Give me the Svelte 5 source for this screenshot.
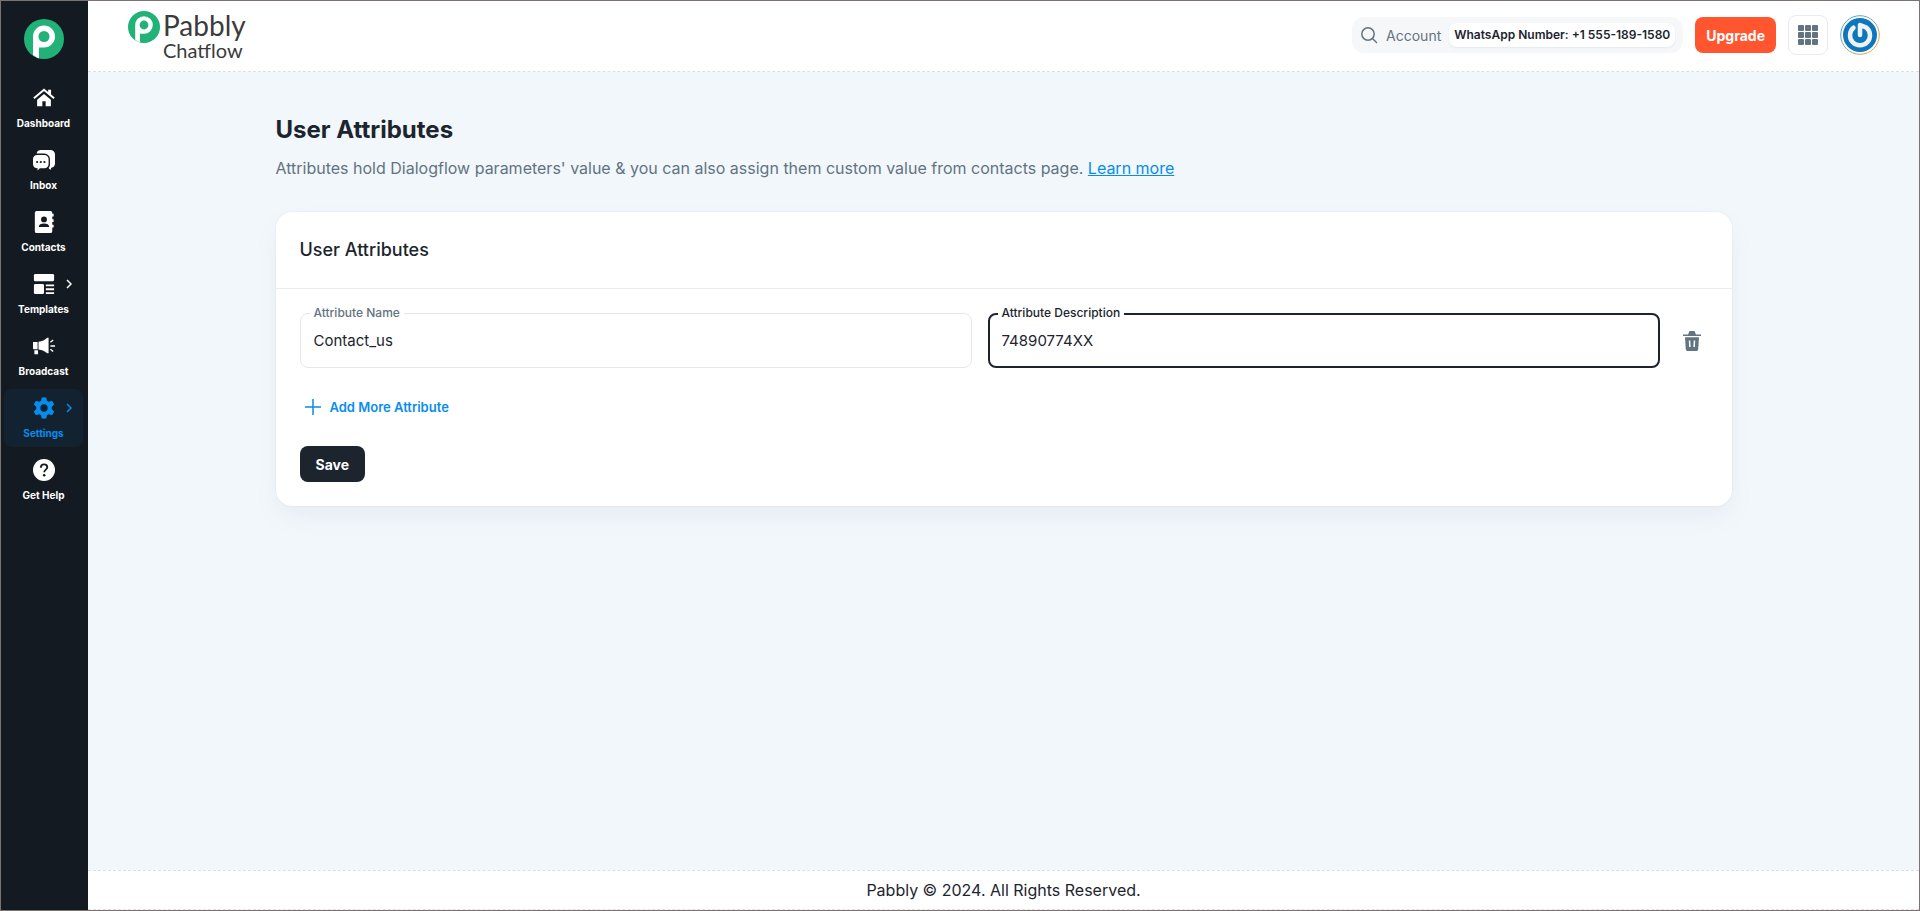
<script>
  let navItems = [
    { id: "dashboard", label: "Dashboard" },
    { id: "inbox", label: "Inbox" },
    { id: "contacts", label: "Contacts" },
    { id: "templates", label: "Templates", children: true },
    { id: "broadcast", label: "Broadcast" },
    { id: "settings", label: "Settings", children: true },
    { id: "help", label: "Get Help" },
  ];
  let active = "settings";

  let attributes = [{ name: "Contact_us", description: "74890774XX" }];

  function addAttribute() {
    attributes = [...attributes, { name: "", description: "" }];
  }

  function removeAttribute(index) {
    attributes = attributes.filter((d, i) => i !== index);
  }
</script>

<div class="app">
  <aside class="sidebar">
    <a class="brand-mark" href="#home" aria-label="Pabbly">
      <svg width="40" height="40" viewBox="0 0 40 40">
        <circle cx="20" cy="20" r="20" fill="#20b276" />
        <path d="M9 36V17.500a11 11 0 1 1 11 11h-5V39.400a20 20 0 0 1-6-3.400z" fill="#fff" />
        <circle cx="20" cy="17.500" r="5.500" fill="#20b276" />
      </svg>
    </a>
    <nav>
      {#each navItems as item}
        <a href="#{item.id}" class="nav-item" class:active={item.id === active}>
          <svg class="nav-icon" viewBox="0 0 24 24" fill="currentColor">
            {#if item.id === "dashboard"}
              <path d="M12 7.500 4.500 13.800v7.200h5.700v-5.500h3.600V21h5.700v-7.200z" />
              <path d="M1 12.200 12 3l11 9.200" fill="none" stroke="currentColor" stroke-width="2.200" />
              <path d="M16.500 3h3.200v6.500l-3.200-2.700z" />
            {:else if item.id === "inbox"}
              <path d="M8 1h11a5 5 0 0 1 5 5v10a5 5 0 0 1-4 4.500L19 23l-2-2.300c1-1 1.500-2.200 1.500-3.700v-6a6 6 0 0 0-6-6H4a4.600 4.600 0 0 1 4-4z" />
              <path fill-rule="evenodd" d="M5 6.500h7.500A4.500 4.500 0 0 1 17 11v5.500a4.500 4.500 0 0 1-4.500 4.500H7.500L5 23.500V21a5 5 0 0 1-5-4.500V11a4.500 4.500 0 0 1 5-4.500zM4.500 13a1.200 1.200 0 1 0 0 2.400 1.200 1.200 0 0 0 0-2.400zm4 0a1.200 1.200 0 1 0 0 2.400 1.200 1.200 0 0 0 0-2.400zm4 0a1.200 1.200 0 1 0 0 2.400 1.200 1.200 0 0 0 0-2.400z" />
            {:else if item.id === "contacts"}
              <path fill-rule="evenodd" d="M4 0h15a2 2 0 0 1 2 2v1h1.500v3H21v3h1.500v3H21v3h1.500v3H21v4a2 2 0 0 1-2 2H4a2 2 0 0 1-2-2V2a2 2 0 0 1 2-2zm8 6a3.200 3.200 0 1 0 0 6.400A3.200 3.200 0 0 0 12 6zm-5.500 11.500h11v-.700c0-2-2-3.300-5.500-3.300s-5.500 1.300-5.500 3.300z" />
            {:else if item.id === "templates"}
              <rect x="1" y="1" width="22" height="8" rx="1.500" />
              <rect x="1" y="12" width="11" height="11" rx="1.500" />
              <path d="M14 12.500h9v2h-9zM14 16.700h9v2h-9zM14 21h9v2h-9z" />
            {:else if item.id === "broadcast"}
              <path d="M0 7.500h5v8H1a1 1 0 0 1-1-1zM6 7.300c4-.3 7-1.800 9.500-4.300H17v17h-1.500C13 17.500 10 16 6 15.700zM1.500 16.500h4V21h-4z" />
              <path d="M19 12h5M19 8l3-2.500M19 15.500l3 2.500" fill="none" stroke="currentColor" stroke-width="1.500" />
            {:else if item.id === "settings"}
              <path fill-rule="evenodd" d="M9.500.5h5l.6 3.500 2.300 1.300 3.300-1.300 2.500 4.300-2.700 2.300v2.800l2.700 2.300-2.500 4.300-3.300-1.300-2.300 1.300-.6 3.500h-5L8.900 20l-2.300-1.300L3.300 20 .8 15.700l2.700-2.300v-2.800L.8 8.300 3.300 4l3.300 1.300L8.900 4zM12 8a4 4 0 1 0 0 8 4 4 0 0 0 0-8z" />
            {:else}
              <circle cx="12" cy="12" r="12" />
              <path d="M8.600 9.500c0-2.200 1.400-3.600 3.500-3.600s3.500 1.300 3.500 3.200c0 2.500-3.400 2.600-3.400 5.400" fill="none" stroke="#141a21" stroke-width="2" />
              <circle cx="12.200" cy="17.800" r="1.400" fill="#141a21" />
            {/if}
          </svg>
          <span>{item.label}</span>
          {#if item.children}
            <svg class="chevron" width="6" height="10" viewBox="0 0 6 10">
              <path d="M1 1l4 4-4 4" fill="none" stroke="currentColor" stroke-width="1.500" />
            </svg>
          {/if}
        </a>
      {/each}
    </nav>
  </aside>

  <div class="page">
    <header>
      <a class="logo" href="#home">
        <svg width="32" height="32" viewBox="0 0 40 40">
          <circle cx="20" cy="20" r="20" fill="#20b276" />
          <path d="M9 36V17.500a11 11 0 1 1 11 11h-5V39.400a20 20 0 0 1-6-3.400z" fill="#fff" />
          <circle cx="20" cy="17.500" r="5.500" fill="#20b276" />
        </svg>
        <span class="logo-text">
          <span class="logo-name">Pabbly</span>
          <span class="logo-product">Chatflow</span>
        </span>
      </a>

      <div class="tools">
        <button class="account" type="button">
          <svg width="18" height="18" viewBox="0 0 18 18" fill="none" stroke="#637381" stroke-width="1.500">
            <circle cx="8" cy="8" r="6.200" />
            <path d="M12.500 12.500l4 4" stroke-linecap="round" />
          </svg>
          <span>Account</span>
          <span class="chip">WhatsApp Number: +1 555-189-1580</span>
        </button>
        <button class="upgrade" type="button">Upgrade</button>
        <button class="apps" type="button" aria-label="Apps">
          <svg width="20" height="20" viewBox="0 0 20 20" fill="#637381">
            {#each [0, 7, 14] as y}
              {#each [0, 7, 14] as x}
                <rect {x} {y} width="6" height="6" rx="1" />
              {/each}
            {/each}
          </svg>
        </button>
        <button class="avatar" type="button" aria-label="Profile">
          <svg width="40" height="40" viewBox="0 0 40 40">
            <defs>
              <linearGradient id="ring" x1="0" y1="0" x2="1" y2="1">
                <stop offset="0" stop-color="#2f9fe8" />
                <stop offset="1" stop-color="#f5b033" />
              </linearGradient>
            </defs>
            <circle cx="20" cy="20" r="19.300" fill="#fff" stroke="url(#ring)" />
            <circle cx="20" cy="20" r="17" fill="#0d76bc" />
            <path d="M13.500 12.700A10 10 0 1 0 26.500 12.700L20 10V20" fill="none" stroke="#eef2f5" stroke-width="4.500" stroke-linecap="round" stroke-linejoin="round" />
          </svg>
        </button>
      </div>
    </header>

    <main>
      <h1>User Attributes</h1>
      <p class="intro">
        Attributes hold Dialogflow parameters' value & you can also assign them custom value from contacts page.
        <a href="#learn">Learn more</a>
      </p>

      <section class="card">
        <h2>User Attributes</h2>
        <form on:submit|preventDefault>
          {#each attributes as attribute, i}
            <div class="row">
              <div class="field">
                <label for="name-{i}">Attribute Name</label>
                <input id="name-{i}" type="text" bind:value={attribute.name} />
              </div>
              <div class="field current">
                <label for="description-{i}">Attribute Description</label>
                <input id="description-{i}" type="text" bind:value={attribute.description} />
              </div>
              <button class="delete" type="button" aria-label="Delete attribute" on:click={() => removeAttribute(i)}>
                <svg width="20" height="20" viewBox="0 0 20 20">
                  <path d="M1 3.500h5L7.500 0h5L14 3.500h5V5H1z" fill="#637381" />
                  <path d="M3 6.200h14l-.8 12c-.1 1.200-.8 1.800-2 1.800H5.800c-1.200 0-1.900-.6-2-1.800z" fill="#637381" />
                  <path d="M7.500 9.500l.4 6.500M12.500 9.500l-.4 6.500" stroke="#fff" stroke-width="1.500" />
                </svg>
              </button>
            </div>
          {/each}
          <button class="add" type="button" on:click={addAttribute}>
            <svg width="16" height="16" viewBox="0 0 16 16">
              <path d="M8 0v16M0 8h16" stroke="currentColor" stroke-width="1.500" />
            </svg>
            Add More Attribute
          </button>
          <button class="save" type="submit">Save</button>
        </form>
      </section>
    </main>

    <footer>Pabbly © 2024. All Rights Reserved.</footer>
  </div>
</div>

<style>
  :global(body) {
    margin: 0;
  }
  .app {
    display: flex;
    box-sizing: border-box;
    min-height: 100vh;
    border: 1px solid #7b7272;
    background: #f1f7fb;
    color: #1c252e;
    font-family: Inter, "Noto Sans", sans-serif;
    font-size: 14px;
  }
  .app * {
    box-sizing: border-box;
  }
  a {
    color: inherit;
    text-decoration: none;
  }
  button {
    padding: 0;
    border: 0;
    background: none;
    color: inherit;
    font: inherit;
    cursor: pointer;
  }
  svg {
    display: block;
    flex: none;
  }

  .sidebar {
    flex: none;
    width: 87px;
    padding: 18px 5px 0 3px;
    background: #141a21;
    color: #fff;
  }
  .brand-mark {
    display: flex;
    justify-content: center;
    margin-bottom: 20px;
  }
  nav {
    display: flex;
    flex-direction: column;
    gap: 4px;
  }
  .nav-item {
    position: relative;
    display: flex;
    flex-direction: column;
    align-items: center;
    gap: 6px;
    height: 58px;
    padding-top: 8px;
    border-radius: 8px;
    font-size: 10px;
    font-weight: 700;
    line-height: 16px;
  }
  .nav-item.active {
    background: #132231;
    color: #078dee;
  }
  .nav-icon {
    width: 22px;
    height: 22px;
  }
  .chevron {
    position: absolute;
    top: 14px;
    right: 11px;
  }

  .page {
    display: flex;
    flex: 1;
    flex-direction: column;
    min-width: 0;
  }
  header {
    display: flex;
    align-items: center;
    justify-content: space-between;
    height: 71px;
    padding: 0 39px 2px 40px;
    border-bottom: 1px dashed #dce0e4;
    background: #fff;
  }
  .logo {
    display: flex;
    align-items: flex-start;
    gap: 3px;
    padding-top: 2px;
    color: #3b3b3b;
    font-family: Lato, sans-serif;
  }
  .logo-text {
    display: flex;
    flex-direction: column;
  }
  .logo-name {
    font-size: 28px;
    line-height: 28px;
  }
  .logo-product {
    font-size: 20px;
    line-height: 22px;
  }
  .tools {
    display: flex;
    align-items: center;
    gap: 12px;
  }
  .account {
    display: flex;
    align-items: center;
    gap: 8px;
    height: 36px;
    padding: 0 8px;
    border-radius: 12px;
    background: #f5f7f9;
    color: #637381;
  }
  .chip {
    padding: 0 5px;
    border-radius: 8px;
    background: #fff;
    box-shadow: 0 1px 2px rgba(145, 158, 171, 0.16);
    color: #1c252e;
    font-size: 12px;
    font-weight: 600;
    line-height: 24px;
  }
  .upgrade,
  .save {
    height: 36px;
    border-radius: 8px;
    color: #fff;
    font-weight: 700;
  }
  .upgrade {
    padding: 0 11px;
    background: #ff5630;
  }
  .apps {
    display: flex;
    align-items: center;
    justify-content: center;
    width: 40px;
    height: 40px;
    border: 1px solid #e8eaed;
    border-radius: 8px;
  }

  main {
    flex: 1;
    width: 100%;
    max-width: 1536px;
    margin: 0 auto;
    padding: 40px;
  }
  h1 {
    margin: 0;
    font-size: 24px;
    font-weight: 700;
    line-height: 36px;
  }
  .intro {
    margin: 8px 0 32px;
    color: #637381;
    font-size: 16px;
    line-height: 24px;
  }
  .intro a {
    color: #078dee;
    text-decoration: underline;
  }
  .card {
    border-radius: 16px;
    background: #fff;
    box-shadow:
      0 0 2px rgba(145, 158, 171, 0.2),
      0 12px 24px -4px rgba(145, 158, 171, 0.12);
  }
  h2 {
    margin: 0;
    padding: 24px;
    border-bottom: 1px solid #e8ebed;
    font-size: 18px;
    font-weight: 500;
    line-height: 28px;
  }
  form {
    display: flex;
    flex-direction: column;
    align-items: flex-start;
    gap: 24px;
    padding: 24px;
  }
  .row {
    display: flex;
    align-items: center;
    gap: 16px;
    width: 100%;
  }
  .field {
    position: relative;
    flex: 1;
  }
  .field label {
    position: absolute;
    top: -8px;
    left: 10px;
    padding: 0 4px;
    background: #fff;
    color: #637381;
    font-size: 12px;
    font-weight: 500;
    line-height: 16px;
  }
  .field input {
    display: block;
    width: 100%;
    height: 55px;
    padding: 0 13px;
    border: 1px solid #e5e8eb;
    border-radius: 8px;
    outline: none;
    background: #fff;
    color: #1c252e;
    font: inherit;
    font-size: 15px;
  }
  .field.current label {
    color: #1c252e;
  }
  .field.current input {
    padding: 0 12px;
    border: 2px solid #1c252e;
  }
  .delete {
    display: flex;
    align-items: center;
    justify-content: center;
    width: 32px;
    height: 36px;
  }
  .add {
    display: flex;
    align-items: center;
    gap: 9px;
    height: 30px;
    padding: 0 5px;
    color: #078dee;
    font-size: 13px;
    font-weight: 600;
  }
  .save {
    padding: 0 16px;
    background: #1c252e;
  }
  footer {
    border-top: 1px dashed #dce0e4;
    border-bottom: 1px dashed #dce0e4;
    background: #fff;
    font-size: 16px;
    line-height: 38px;
    text-align: center;
  }
</style>
